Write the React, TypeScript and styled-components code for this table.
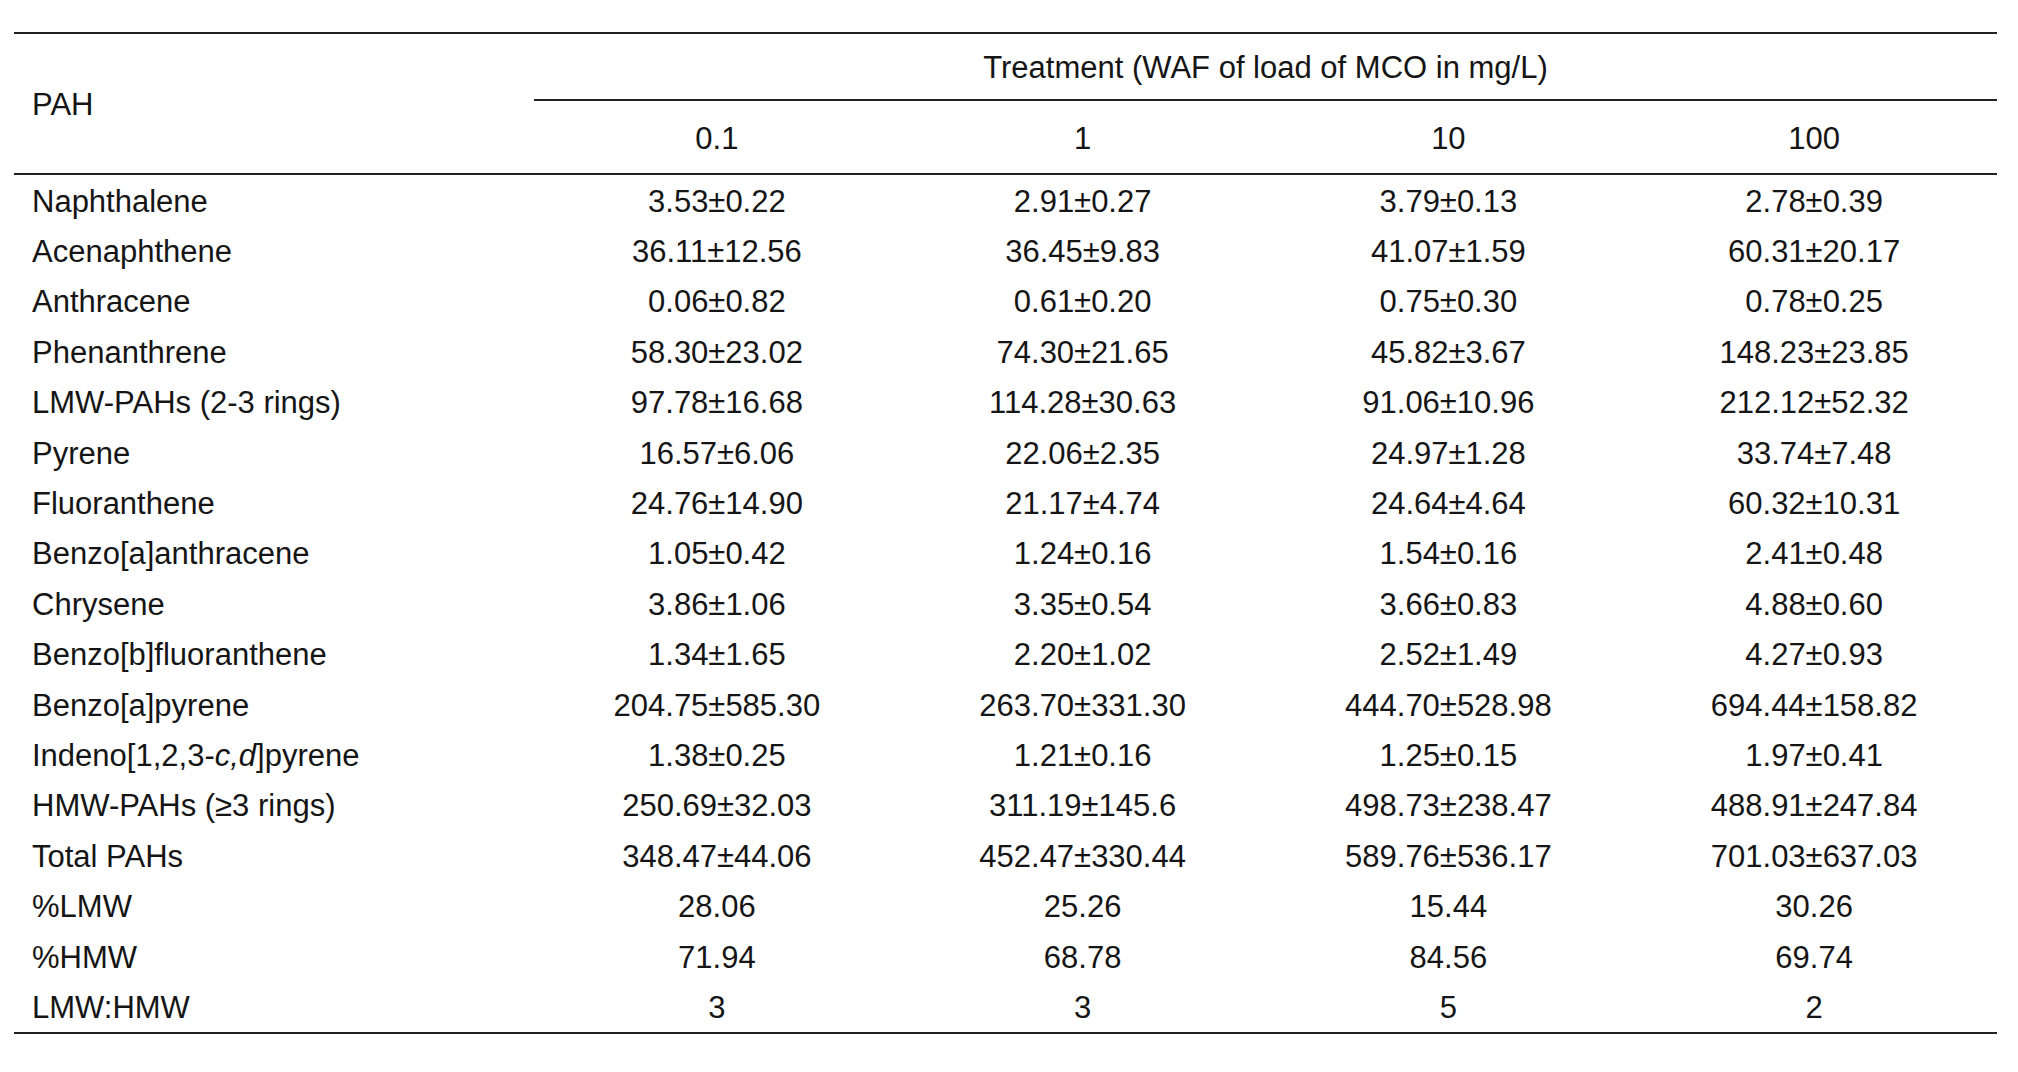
import React from 'react';
import styled, { createGlobalStyle } from 'styled-components';

const GlobalStyle = createGlobalStyle`
	html, body {
		margin: 0;
		padding: 0;
		background: #ffffff;
	}
	body {
		font-family: 'Liberation Sans', Arial, sans-serif;
		color: #151515;
	}
`;

const Page = styled.div`
	padding: 32px 21px 0 14px;
`;

const Table = styled.table`
	width: 1983px;
	table-layout: fixed;
	border-collapse: separate;
	border-spacing: 0;
	border-top: 2px solid #222;
	border-bottom: 2px solid #222;
	font-size: 31px;
	line-height: 1;
`;

const HeadCell = styled.th<{ $left?: boolean; $rule?: boolean; $h: number }>`
	font-weight: 400;
	padding: 2px 0 0 ${(p) => (p.$left ? '18px' : '0')};
	text-align: ${(p) => (p.$left ? 'left' : 'center')};
	vertical-align: middle;
	height: ${(p) => p.$h}px;
	border-bottom: ${(p) => (p.$rule ? '2px solid #222' : 'none')};
	box-sizing: border-box;
	white-space: nowrap;
`;

const Cell = styled.td<{ $left?: boolean }>`
	padding: 2px 0 0 ${(p) => (p.$left ? '18px' : '0')};
	text-align: ${(p) => (p.$left ? 'left' : 'center')};
	vertical-align: middle;
	height: 48.4px;
	white-space: nowrap;
`;

const doses = ['0.1', '1', '10', '100'];

const rows: [React.ReactNode, string[]][] = [
	['Naphthalene', ['3.53±0.22', '2.91±0.27', '3.79±0.13', '2.78±0.39']],
	['Acenaphthene', ['36.11±12.56', '36.45±9.83', '41.07±1.59', '60.31±20.17']],
	['Anthracene', ['0.06±0.82', '0.61±0.20', '0.75±0.30', '0.78±0.25']],
	['Phenanthrene', ['58.30±23.02', '74.30±21.65', '45.82±3.67', '148.23±23.85']],
	['LMW-PAHs (2-3 rings)', ['97.78±16.68', '114.28±30.63', '91.06±10.96', '212.12±52.32']],
	['Pyrene', ['16.57±6.06', '22.06±2.35', '24.97±1.28', '33.74±7.48']],
	['Fluoranthene', ['24.76±14.90', '21.17±4.74', '24.64±4.64', '60.32±10.31']],
	['Benzo[a]anthracene', ['1.05±0.42', '1.24±0.16', '1.54±0.16', '2.41±0.48']],
	['Chrysene', ['3.86±1.06', '3.35±0.54', '3.66±0.83', '4.88±0.60']],
	['Benzo[b]fluoranthene', ['1.34±1.65', '2.20±1.02', '2.52±1.49', '4.27±0.93']],
	['Benzo[a]pyrene', ['204.75±585.30', '263.70±331.30', '444.70±528.98', '694.44±158.82']],
	[
		<>
			Indeno[1,2,3-<em>c,d</em>]pyrene
		</>,
		['1.38±0.25', '1.21±0.16', '1.25±0.15', '1.97±0.41'],
	],
	['HMW-PAHs (≥3 rings)', ['250.69±32.03', '311.19±145.6', '498.73±238.47', '488.91±247.84']],
	['Total PAHs', ['348.47±44.06', '452.47±330.44', '589.76±536.17', '701.03±637.03']],
	['%LMW', ['28.06', '25.26', '15.44', '30.26']],
	['%HMW', ['71.94', '68.78', '84.56', '69.74']],
	['LMW:HMW', ['3', '3', '5', '2']],
];

export default function App() {
	return (
		<>
			<GlobalStyle />
			<Page>
				<Table>
					<colgroup>
						<col style={{ width: 520 }} />
						<col />
						<col />
						<col />
						<col />
					</colgroup>
					<thead>
						<tr>
							<HeadCell rowSpan={2} $left $rule $h={67}>
								PAH
							</HeadCell>
							<HeadCell colSpan={4} $rule $h={67}>
								Treatment (WAF of load of MCO in mg/L)
							</HeadCell>
						</tr>
						<tr>
							{doses.map((d) => (
								<HeadCell key={d} $rule $h={74}>
									{d}
								</HeadCell>
							))}
						</tr>
					</thead>
					<tbody>
						{rows.map(([name, vals], i) => (
							<tr key={i}>
								<Cell $left>{name}</Cell>
								{vals.map((v, j) => (
									<Cell key={j}>{v}</Cell>
								))}
							</tr>
						))}
					</tbody>
				</Table>
			</Page>
		</>
	);
}
